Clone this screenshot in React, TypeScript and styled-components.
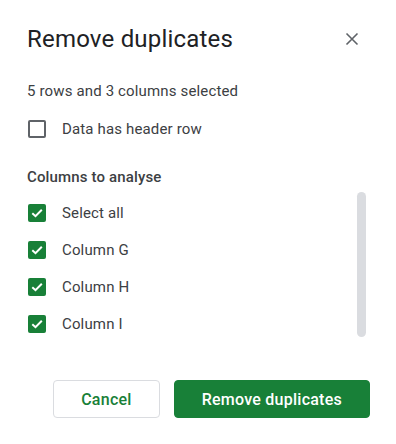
import React from "react";
import styled, { createGlobalStyle } from "styled-components";

const Global = createGlobalStyle`
  html, body { margin: 0; padding: 0; background: #ffffff; }
  body { font-family: Roboto, "Liberation Sans", Arial, sans-serif; -webkit-font-smoothing: antialiased; }
  * { box-sizing: border-box; }
`;

const Dialog = styled.div`
  width: 396px;
  height: 444px;
  background: #fff;
  padding: 23px 26px 0 27px;
  display: flex;
  flex-direction: column;
`;

const Header = styled.div`
  display: flex;
  align-items: center;
  justify-content: space-between;
  height: 32px;
`;

const Title = styled.h1`
  margin: 0;
  font-family: Roboto, "Liberation Sans", Arial, sans-serif;
  font-weight: 400;
  font-size: 24px;
  line-height: 32px;
  letter-spacing: 0.2px;
  color: #202124;
`;

const CloseButton = styled.button`
  width: 24px;
  height: 24px;
  margin-right: 6px;
  padding: 0;
  border: none;
  background: transparent;
  display: flex;
  align-items: center;
  justify-content: center;
  cursor: pointer;
`;

const Subtitle = styled.div`
  margin-top: 26px;
  font-size: 15px;
  line-height: 20px;
  letter-spacing: 0.15px;
  color: #3c4043;
`;

const Row = styled.label<{ $top?: number }>`
  display: flex;
  align-items: center;
  height: 37px;
  margin-top: ${(p) => p.$top ?? 0}px;
  padding-left: 1px;
  gap: 16px;
  font-size: 15px;
  letter-spacing: 0.15px;
  color: #3c4043;
  cursor: pointer;
`;

const Box = styled.span<{ $checked: boolean }>`
  width: 18px;
  height: 18px;
  flex: none;
  border-radius: 2px;
  display: flex;
  align-items: center;
  justify-content: center;
  background: ${(p) => (p.$checked ? "#188038" : "transparent")};
  border: ${(p) => (p.$checked ? "none" : "2px solid #5f6368")};
`;

const SectionLabel = styled.div`
  margin-top: 20px;
  font-size: 15px;
  font-weight: 500;
  line-height: 20px;
  letter-spacing: 0.15px;
  color: #3c4043;
`;

const ListArea = styled.div`
  margin-top: 5px;
  display: flex;
  align-items: flex-start;
  justify-content: space-between;
`;

const List = styled.div`
  padding-top: 2px;
  display: flex;
  flex-direction: column;
`;

const Scrollbar = styled.div`
  width: 9px;
  height: 145px;
  margin-right: 4px;
  border-radius: 5px;
  background: #dadce0;
`;

const Footer = styled.div`
  margin-top: 38px;
  display: flex;
  justify-content: flex-end;
  gap: 14px;
`;

const Button = styled.button<{ $primary?: boolean }>`
  height: 38px;
  padding: 0 27px;
  border-radius: 4px;
  font-family: Roboto, "Liberation Sans", Arial, sans-serif;
  font-size: 16px;
  font-weight: 500;
  letter-spacing: 0.25px;
  cursor: pointer;
  border: 1px solid ${(p) => (p.$primary ? "#188038" : "#dadce0")};
  background: ${(p) => (p.$primary ? "#188038" : "#ffffff")};
  color: ${(p) => (p.$primary ? "#ffffff" : "#188038")};
`;

const Check = () => (
  <svg width="14" height="14" viewBox="0 0 14 14" aria-hidden>
    <path d="M2.3 7.2 L5.5 10.2 L11.8 3.8" fill="none" stroke="#fff" strokeWidth="2" />
  </svg>
);

const Checkbox = ({ checked }: { checked: boolean }) => (
  <Box $checked={checked}>{checked && <Check />}</Box>
);

const columns = ["Select all", "Column G", "Column H", "Column I"];

export default function App() {
  return (
    <>
      <Global />
      <Dialog>
        <Header>
          <Title>Remove duplicates</Title>
          <CloseButton aria-label="Close">
            <svg width="14" height="14" viewBox="0 0 14 14">
              <path d="M1.5 1.5 L12.5 12.5 M12.5 1.5 L1.5 12.5" stroke="#5f6368" strokeWidth="1.6" />
            </svg>
          </CloseButton>
        </Header>
        <Subtitle>5 rows and 3 columns selected</Subtitle>
        <Row $top={9}>
          <Checkbox checked={false} />
          Data has header row
        </Row>
        <SectionLabel>Columns to analyse</SectionLabel>
        <ListArea>
          <List>
            {columns.map((c) => (
              <Row key={c}>
                <Checkbox checked />
                {c}
              </Row>
            ))}
          </List>
          <Scrollbar />
        </ListArea>
        <Footer>
          <Button>Cancel</Button>
          <Button $primary>Remove duplicates</Button>
        </Footer>
      </Dialog>
    </>
  );
}
